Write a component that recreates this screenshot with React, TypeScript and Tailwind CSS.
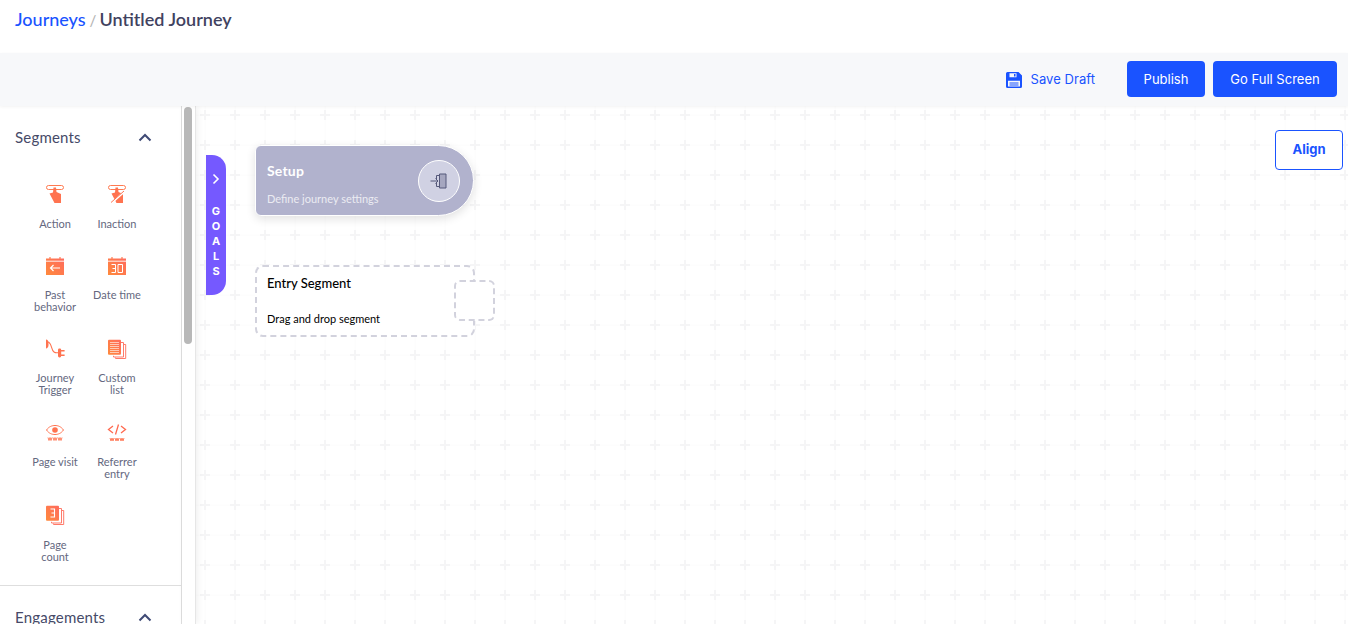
import React from "react";

const O1 = "#ff8a3c";
const O2 = "#ff6a5e";

function Grad({ id }: { id: string }) {
  return (
    <defs>
      <linearGradient id={id} x1="0" y1="1" x2="1" y2="0">
        <stop offset="0" stopColor={O1} />
        <stop offset="1" stopColor={O2} />
      </linearGradient>
    </defs>
  );
}

const Action = ({ slash }: { slash?: boolean }) => (
  <svg width="20" height="20" viewBox="0 0 20 20" fill="none">
    <rect x="1.5" y="1.5" width="17" height="4" rx="2" stroke="#ff7a50" strokeWidth="1" />
    <path d="M4.5 9.5 L8 8.5 L8.5 3.5 L11 3.5 L11.5 8 L16 10 L16 19 L9.5 19 Z" fill="#ff7350" />
    {slash && <path d="M4 19.5 L17.5 7.5" stroke="#fff" strokeWidth="2" />}
    {slash && <path d="M4 18.5 L17 7" stroke="#ff7350" strokeWidth="1" />}
  </svg>
);

const PastBehavior = () => (
  <svg width="20" height="20" viewBox="0 0 20 20">
    <Grad id="g-past" />
    <path d="M1 2.5h18V19H1z" fill="url(#g-past)" />
    <path d="M5 1v2M15 1v2" stroke="#ff7a50" strokeWidth="1.2" />
    <path d="M1 5.2h18" stroke="#fff" strokeWidth="0.9" />
    <path d="M15 12H5.5M8.5 9l-3 3 3 3" stroke="#fff" strokeWidth="1.2" fill="none" />
  </svg>
);

const DateTime = () => (
  <svg width="20" height="20" viewBox="0 0 20 20">
    <Grad id="g-date" />
    <path d="M1 2.5h18V19H1z" fill="url(#g-date)" />
    <path d="M5 1v2M15 1v2" stroke="#ff7a50" strokeWidth="1.2" />
    <path d="M1 5.2h18" stroke="#fff" strokeWidth="0.9" />
    <path d="M4.5 8.5h4v8h-4M5.5 12.5h3M11 8.5h4.5v8H11z" stroke="#fff" strokeWidth="1" fill="none" />
  </svg>
);

const Trigger = () => (
  <svg width="20" height="20" viewBox="0 0 20 20" fill="none">
    <path d="M1 0.5C2.6 0.5 3.5 2 3.5 4V6C3.5 8 2.2 9.5 1 9.5Z" fill="#ff7350" />
    <path d="M3 3C7 4 6 11 9 13C10.5 14 12 14 13.5 13.5" stroke="#ff7350" strokeWidth="1.1" />
    <rect x="13" y="9.5" width="3.2" height="9" rx="1.4" fill="#ff7350" />
    <path d="M16 11.7h3.6M16 16.2h3.6" stroke="#ff7350" strokeWidth="1.5" />
  </svg>
);

const ListIcon = ({ id, digit }: { id: string; digit?: boolean }) => (
  <svg width="20" height="20" viewBox="0 0 20 20" fill="none">
    <Grad id={id} />
    <path d="M14 3.5h2.5V18H6.5v-1.2" stroke="#ff7a6a" strokeWidth="1" />
    <path d="M16.5 5.5H18.7V19.5H8.5V18.5" stroke="#ff7a6a" strokeWidth="1" />
    <rect x="1" y="0.7" width="13" height="15" rx="1" fill={`url(#${id})`} />
    {digit ? (
      <path d="M5.5 4h4v8h-4M6.5 8h3" stroke="#fff" strokeWidth="1.1" />
    ) : (
      <path d="M3 3.5h9M3 5.5h9M3 7.5h9M3 9.5h9M3 11.5h9M3 13.5h9" stroke="#fff" strokeWidth="0.7" opacity="0.85" />
    )}
  </svg>
);

const Www = ({ y = 17 }: { y?: number }) => (
  <path
    d={`M3 ${y - 1.5}l1 3 1-3 1 3 1-3M8 ${y - 1.5}l1 3 1-3 1 3 1-3M13 ${y - 1.5}l1 3 1-3 1 3 1-3`}
    stroke="#ff7350"
    strokeWidth="0.9"
    fill="none"
  />
);

const PageVisit = () => (
  <svg width="20" height="20" viewBox="0 0 20 20" fill="none">
    <path d="M1.5 8C4 4.5 7 3.5 10 3.5s6 1 8.5 4.5C16 11.5 13 12.5 10 12.5S4 11.5 1.5 8z" stroke="#ff7350" strokeWidth="1" />
    <circle cx="10" cy="8" r="2.8" fill="#ff7350" />
    <Www y={17} />
  </svg>
);

const Referrer = () => (
  <svg width="20" height="20" viewBox="0 0 20 20" fill="none">
    <path d="M6 4L1.5 7.5 6 11M14 4l4.5 3.5L14 11M11.5 2.5L8.5 12.5" stroke="#ff6a50" strokeWidth="1.3" />
    <Www y={17.5} />
  </svg>
);

const SaveIcon = () => (
  <svg width="16" height="16" viewBox="0 0 16 16" className="shrink-0">
    <path
      fill="#1a53ff"
      fillRule="evenodd"
      d="M1.5 0H12.5L16 3.5V14.5A1.5 1.5 0 0 1 14.5 16h-13A1.5 1.5 0 0 1 0 14.5v-13A1.5 1.5 0 0 1 1.5 0zM3.5 1.2V5.2H10.5V1.2zM2 8.7V14.6H14V8.7z"
    />
    <path d="M8 2h1.5v2.5H8zM3.5 10.5h9v1h-9zM3.5 12.5h9v1h-9z" fill="#1a53ff" />
  </svg>
);

const items: { label: React.ReactNode; icon: React.ReactNode; low?: boolean }[] = [
  { label: "Action", icon: <Action />, low: true },
  { label: "Inaction", icon: <Action slash />, low: true },
  { label: <>Past<br />behavior</>, icon: <PastBehavior /> },
  { label: "Date time", icon: <DateTime /> },
  { label: <>Journey<br />Trigger</>, icon: <Trigger /> },
  { label: <>Custom<br />list</>, icon: <ListIcon id="g-l1" /> },
  { label: "Page visit", icon: <PageVisit />, low: true },
  { label: <>Referrer<br />entry</>, icon: <Referrer />, low: true },
  { label: <>Page<br />count</>, icon: <ListIcon id="g-l2" digit />, low: true },
];

function Chevron() {
  return (
    <svg width="14" height="9" viewBox="0 0 14 9" fill="none" className="mt-[6px]">
      <path d="M1.5 7.5L7 2l5.5 5.5" stroke="#3f4a75" strokeWidth="2" />
    </svg>
  );
}

export default function App() {
  return (
    <div className="w-[1348px] h-[624px] overflow-hidden bg-white flex flex-col font-['Lato','Open_Sans',sans-serif]">
      <div className="h-[53px] shrink-0 pl-[15px] pt-[7px] text-[18px] leading-[24px] font-medium">
        <span className="text-[#1a53ff]">Journeys</span>
        <span className="text-[#b5b5b5] ml-[4px] mr-[3px] text-[15px]">/</span>
        <span className="text-[#41425f] font-semibold">Untitled Journey</span>
      </div>

      <div className="h-[53px] shrink-0 bg-[#f7f8fa] flex items-center justify-end pr-[11px] pb-[1px] relative z-20 shadow-[0_1px_3px_rgba(0,0,0,0.05)]">
        <div className="flex items-center gap-[9px] mr-[32px] pt-[1px] font-['Inter',sans-serif] text-[13px] tracking-[0.05px] text-[#1a53ff]">
          <SaveIcon />
          <span>Save Draft</span>
        </div>
        <button className="h-[36px] w-[78px] pt-[1px] rounded-[4px] bg-[#1a53ff] text-white text-[13px] font-['Inter',sans-serif] mr-[8px]">Publish</button>
        <button className="h-[36px] w-[124px] pt-[1px] rounded-[4px] bg-[#1a53ff] text-white text-[13px] font-['Inter',sans-serif]">Go Full Screen</button>
      </div>

      <div className="flex-1 flex min-h-0">
        <aside className="w-[182px] shrink-0 border-r border-[#dedede] overflow-hidden">
          <div className="flex items-start justify-between pl-[15px] pr-[29px] pt-[21px] h-[77px]">
            <span className="text-[15px] leading-[20px] tracking-[0.2px] text-[#464a68]">Segments</span>
            <Chevron />
          </div>
          <div className="grid grid-cols-[62px_62px] grid-rows-[72px_83px_83px_83px_81px] pl-[24px]">
            {items.map((it, i) => (
              <div key={i} className="flex flex-col items-center text-center">
                <div className="h-[22px] flex items-center justify-center">{it.icon}</div>
                <div className={(it.low ? "mt-[13px]" : "mt-[12px]") + " text-[11px] leading-[12px] text-[#646880] whitespace-nowrap"}>{it.label}</div>
              </div>
            ))}
          </div>
          <div className="border-t border-[#dedede] flex items-start justify-between pl-[15px] pr-[29px] pt-[21px]">
            <span className="text-[15px] leading-[20px] tracking-[0.2px] text-[#464a68]">Engagements</span>
            <Chevron />
          </div>
        </aside>

        <div className="w-[14px] shrink-0 bg-white border-r border-[#e6e6e6] pt-[1px] flex justify-center relative z-10 shadow-[2px_0_6px_rgba(0,0,0,0.06)]">
          <div className="w-[8px] h-[237px] rounded-[4px] bg-[#b8b8b8] -ml-[1px]" />
        </div>

        <main className="relative flex-1 min-w-0 overflow-hidden bg-white">
          <svg className="absolute inset-0" width="100%" height="100%">
            <defs>
              <pattern id="plus" x="-6" y="-6" width="30" height="30" patternUnits="userSpaceOnUse">
                <path d="M15 0v30M0 15h30" stroke="#fcfcfc" strokeWidth="1" />
                <path d="M15 10v10M10 15h10" stroke="#f5f5f6" strokeWidth="2" />
              </pattern>
            </defs>
            <rect width="100%" height="100%" fill="url(#plus)" />
          </svg>

          <div className="absolute left-[10px] top-[49px] w-[20px] h-[140px] rounded-r-[14px] bg-[#7559ff] text-white flex flex-col items-center pt-[18px]">
            <svg width="8" height="12" viewBox="0 0 8 12" fill="none">
              <path d="M1.5 1.5L6 6l-4.5 4.5" stroke="#fff" strokeWidth="1.6" />
            </svg>
            <div className="mt-[19px] flex flex-col items-center text-[11px] leading-[15px] font-bold font-['Inter',sans-serif]">
              <span>G</span><span>O</span><span>A</span><span>L</span><span>S</span>
            </div>
          </div>

          <div className="absolute left-[59px] top-[39px] w-[219px] h-[71px] rounded-l-[6px] rounded-r-[36px] bg-[#b1b2cd] border border-white shadow-[0_3px_10px_rgba(0,0,0,0.12)] flex items-center justify-between pl-[11px] pr-[13px]">
            <div className="text-white">
              <div className="mt-[7px] text-[14px] leading-[16px] font-bold tracking-[0.2px]">Setup</div>
              <div className="mt-[13px] text-[11px] leading-[14px] opacity-75">Define journey settings</div>
            </div>
            <div className="w-[42px] h-[42px] rounded-full bg-[#d0d1e3] border-[1.5px] border-white flex items-center justify-center">
              <svg width="20" height="20" viewBox="0 0 20 20" fill="none">
                <path d="M10.5 3H17V17H10.5z" stroke="#55587a" strokeWidth="1" fill="#a5a6bf" />
                <path d="M7.5 4.5H10.5M7.5 4.5V8M7.5 12V15.5H10.5" stroke="#55587a" strokeWidth="1" />
                <path d="M1.5 10H9M6.5 7.5L9 10L6.5 12.5" stroke="#55587a" strokeWidth="1" />
              </svg>
            </div>
          </div>

          <div className="absolute left-[59px] top-[159px] w-[220px] h-[72px] rounded-[8px] border-2 border-dashed border-[#d2d2dd] bg-white pl-[10px] pt-[8px] text-black">
            <div className="text-[13px] leading-[16px] font-medium">Entry Segment</div>
            <div className="mt-[21px] text-[11px] leading-[14px]">Drag and drop segment</div>
          </div>
          <div className="absolute left-[258px] top-[174px] w-[41px] h-[41px] rounded-[6px] border-2 border-dashed border-[#d2d2dd] bg-white" />

          <button className="absolute right-[5px] top-[24px] w-[68px] h-[40px] rounded-[4px] border border-[#1a53ff] bg-white text-[#1a53ff] text-[13px] font-bold font-['Inter',sans-serif]">Align</button>
        </main>
      </div>
    </div>
  );
}
